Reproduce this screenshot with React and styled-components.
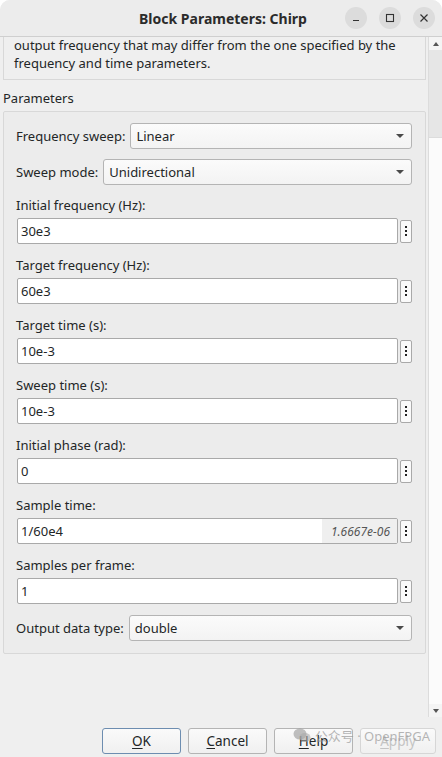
import React from "react";
import styled, { createGlobalStyle } from "styled-components";

const Global = createGlobalStyle`
  html, body { margin: 0; padding: 0; background: #ffffff; }
  body { font-family: "Noto Sans", "Open Sans", sans-serif; font-size: 13px; color: #232627; }
  * { box-sizing: border-box; }
`;

const Window = styled.div`
  width: 442px;
  height: 757px;
  background: #efefef;
  border-radius: 10px 10px 0 0;
  display: flex;
  flex-direction: column;
  overflow: hidden;
  position: relative;
`;

const TitleBar = styled.div`
  height: 37px;
  flex: 0 0 37px;
  display: flex;
  align-items: center;
  justify-content: center;
  position: relative;
  border-bottom: 1px solid #cfcfcf;
  background: #ececec;
`;

const Title = styled.div`
  font-weight: 700;
  font-size: 14px;
  color: #2b2b2b;
  margin-left: 4px;
`;

const WinButtons = styled.div`
  position: absolute;
  right: 7px;
  top: 7px;
  display: flex;
  gap: 12px;
`;

const WinButton = styled.div`
  width: 22px;
  height: 22px;
  border-radius: 50%;
  background: #dcdcdc;
  display: flex;
  align-items: center;
  justify-content: center;
`;

const Body = styled.div`
  flex: 1;
  display: flex;
  min-height: 0;
`;

const Scroller = styled.div`
  flex: 1;
  display: flex;
  flex-direction: column;
  padding: 0 2px 0 3px;
`;

const Description = styled.div`
  border: 1px solid #d8d8d8;
  border-top: none;
  padding: 0 8px 7px 10px;
  line-height: 18px;
  font-size: 13px;
  color: #232627;
  margin-top: -1px;
`;

const SectionLabel = styled.div`
  margin-top: 8px;
  height: 20px;
  line-height: 20px;
  font-size: 13px;
`;

const Group = styled.div`
  margin-top: 3px;
  border: 1px solid #d8d8d8;
  border-radius: 2px;
  background: #ececec;
  padding: 11px 13px 12px 11px;
  display: flex;
  flex-direction: column;
`;

const InlineRow = styled.div`
  display: flex;
  align-items: center;
  gap: 5px;
  height: 26px;
  margin-bottom: ${(p) => p.$gap || 0}px;
`;

const Label = styled.div`
  white-space: nowrap;
  font-size: 13px;
  padding-left: 1px;
`;

const Combo = styled.div`
  flex: 1;
  height: 26px;
  border: 1px solid #b4b4b4;
  border-radius: 3px;
  background: linear-gradient(#fbfbfb, #f3f3f3);
  display: flex;
  align-items: center;
  justify-content: space-between;
  padding: 0 7px 0 5px;
`;

const Arrow = styled.div`
  width: 0;
  height: 0;
  border-left: 4px solid transparent;
  border-right: 4px solid transparent;
  border-top: 4px solid #4a4a4a;
`;

const Field = styled.div`
  display: flex;
  flex-direction: column;
  margin-bottom: 11px;
`;

const FieldLabel = styled.div`
  height: 20px;
  line-height: 20px;
  margin-bottom: 3px;
  padding-left: 1px;
`;

const FieldRow = styled.div`
  display: flex;
  align-items: center;
  gap: 2px;
  padding-left: 2px;
`;

const Input = styled.div`
  flex: 1;
  height: 26px;
  border: 1px solid #a9a9a9;
  border-radius: 2px;
  background: #ffffff;
  display: flex;
  align-items: center;
  justify-content: space-between;
  overflow: hidden;
`;

const InputText = styled.span`
  padding-left: 3px;
`;

const Evaluated = styled.span`
  align-self: stretch;
  display: flex;
  align-items: center;
  background: #efefef;
  padding: 0 7px 0 9px;
  font-style: italic;
  font-size: 12px;
  color: #555;
`;

const MoreButton = styled.div`
  width: 12px;
  height: 23px;
  border: 1px solid #a9a9a9;
  border-radius: 2px;
  background: #fafafa;
  display: flex;
  flex-direction: column;
  align-items: center;
  justify-content: center;
  gap: 2px;
`;

const Dot = styled.span`
  width: 2px;
  height: 2px;
  background: #222;
`;

const Scrollbar = styled.div`
  width: 14px;
  flex: 0 0 14px;
  display: flex;
  flex-direction: column;
  border-left: 1px solid #dcdcdc;
  background: #fbfbfb;
  margin-bottom: 40px;
`;

const ScrollArrow = styled.div`
  height: 13px;
  display: flex;
  align-items: center;
  justify-content: center;
  background: #f4f4f4;
`;

const Triangle = styled.div`
  width: 0;
  height: 0;
  border-left: 3px solid transparent;
  border-right: 3px solid transparent;
  ${(p) => (p.$up ? "border-bottom: 4px solid #555;" : "border-top: 4px solid #555;")}
`;

const Thumb = styled.div`
  height: 88px;
  background: #e6e6e6;
  border-bottom: 1px solid #dcdcdc;
`;

const Track = styled.div`
  flex: 1;
`;

const ButtonBar = styled.div`
  position: absolute;
  left: 0;
  right: 0;
  bottom: 3px;
  display: flex;
  justify-content: flex-end;
  gap: 7px;
  padding-right: 6px;
`;

const DialogButton = styled.div`
  width: ${(p) => p.$w || 79}px;
  height: 26px;
  border: 1px solid ${(p) => (p.$default ? "#6d8db0" : "#b4b4b4")};
  border-radius: 3px;
  background: linear-gradient(#fafafa, #f0f0f0);
  display: flex;
  align-items: center;
  justify-content: center;
  font-size: 13.5px;
  color: ${(p) => (p.$disabled ? "#c4c4c4" : "#232627")};
  ${(p) => p.$disabled && "border-color: #d6d6d6;"}
`;

const Mnemonic = styled.span`
  text-decoration: underline;
  text-underline-offset: 2px;
`;

const Watermark = styled.div`
  position: absolute;
  right: 12px;
  bottom: 12px;
  display: flex;
  align-items: center;
  gap: 4px;
  font-size: 13px;
  color: rgba(150, 150, 150, 0.7);
  pointer-events: none;
  font-family: "Noto Sans", "Noto Sans CJK SC", sans-serif;
`;

const params = [
  { label: "Initial frequency (Hz):", value: "30e3" },
  { label: "Target frequency (Hz):", value: "60e3" },
  { label: "Target time (s):", value: "10e-3" },
  { label: "Sweep time (s):", value: "10e-3" },
  { label: "Initial phase (rad):", value: "0" },
  { label: "Sample time:", value: "1/60e4", evaluated: "1.6667e-06" },
  { label: "Samples per frame:", value: "1" },
];

function More() {
  return (
    <MoreButton>
      <Dot />
      <Dot />
      <Dot />
    </MoreButton>
  );
}

export default function App() {
  return (
    <>
      <Global />
      <Window>
        <TitleBar>
          <Title>Block Parameters: Chirp</Title>
          <WinButtons>
            <WinButton>
              <svg width="10" height="10" viewBox="0 0 10 10">
                <path d="M2 7.5h6" stroke="#333" strokeWidth="1.2" />
              </svg>
            </WinButton>
            <WinButton>
              <svg width="10" height="10" viewBox="0 0 10 10">
                <rect x="1.5" y="1.5" width="7" height="7" fill="none" stroke="#333" strokeWidth="1.1" />
              </svg>
            </WinButton>
            <WinButton>
              <svg width="10" height="10" viewBox="0 0 10 10">
                <path d="M1.5 1.5l7 7M8.5 1.5l-7 7" stroke="#333" strokeWidth="1.2" />
              </svg>
            </WinButton>
          </WinButtons>
        </TitleBar>
        <Body>
          <Scroller>
            <Description>
              output frequency that may differ from the one specified by the frequency and time parameters.
            </Description>
            <SectionLabel>Parameters</SectionLabel>
            <Group>
              <InlineRow $gap={10}>
                <Label>Frequency sweep:</Label>
                <Combo>
                  <span>Linear</span>
                  <Arrow />
                </Combo>
              </InlineRow>
              <InlineRow $gap={10}>
                <Label>Sweep mode:</Label>
                <Combo>
                  <span>Unidirectional</span>
                  <Arrow />
                </Combo>
              </InlineRow>
              {params.map((p) => (
                <Field key={p.label}>
                  <FieldLabel>{p.label}</FieldLabel>
                  <FieldRow>
                    <Input>
                      <InputText>{p.value}</InputText>
                      {p.evaluated && <Evaluated>{p.evaluated}</Evaluated>}
                    </Input>
                    <More />
                  </FieldRow>
                </Field>
              ))}
              <InlineRow>
                <Label>Output data type:</Label>
                <Combo>
                  <span>double</span>
                  <Arrow />
                </Combo>
              </InlineRow>
            </Group>
          </Scroller>
          <Scrollbar>
            <ScrollArrow>
              <Triangle $up />
            </ScrollArrow>
            <Thumb />
            <Track />
            <ScrollArrow>
              <Triangle />
            </ScrollArrow>
          </Scrollbar>
        </Body>
        <ButtonBar>
          <DialogButton $default>
            <Mnemonic>O</Mnemonic>K
          </DialogButton>
          <DialogButton>
            <Mnemonic>C</Mnemonic>ancel
          </DialogButton>
          <DialogButton>
            <Mnemonic>H</Mnemonic>elp
          </DialogButton>
          <DialogButton $w={76} $disabled>
            <Mnemonic>A</Mnemonic>pply
          </DialogButton>
        </ButtonBar>
        <Watermark>
          <svg width="18" height="15" viewBox="0 0 18 15">
            <ellipse cx="7" cy="6" rx="6.5" ry="5.5" fill="rgba(150,150,150,0.6)" />
            <ellipse cx="12" cy="9.5" rx="5.5" ry="4.5" fill="rgba(170,170,170,0.6)" />
          </svg>
          <span>公众号 · OpenFPGA</span>
        </Watermark>
      </Window>
    </>
  );
}
